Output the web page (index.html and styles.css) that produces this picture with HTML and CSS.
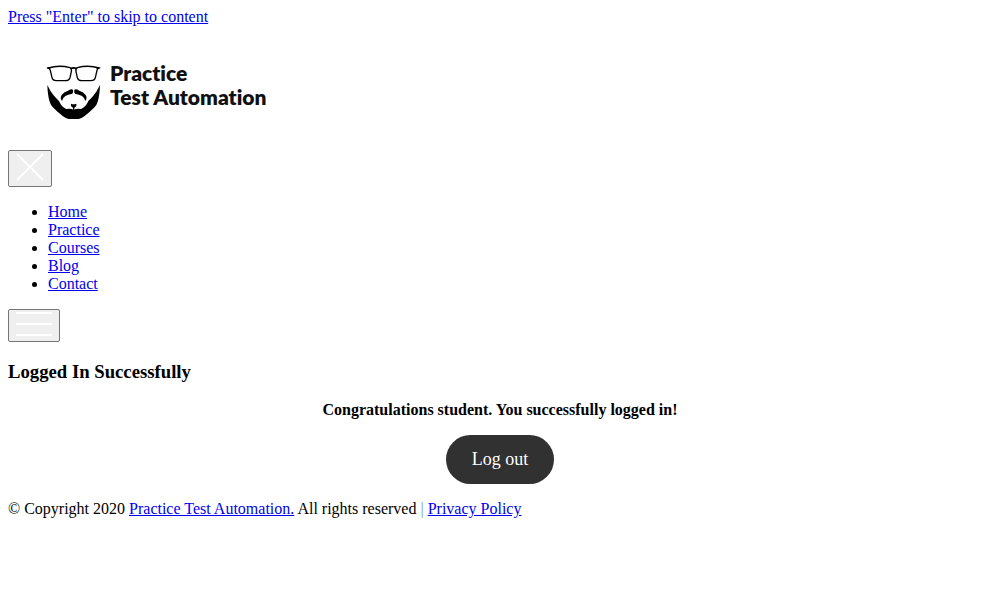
FILE: index.html
```html
<!DOCTYPE html>
<html lang="en">
<head>
<meta charset="utf-8">
<meta name="viewport" content="width=device-width, initial-scale=1">
<title>Logged In Successfully | Practice Test Automation</title>
<link rel="stylesheet" href="styles.css">
</head>
<body>
<a class="skip" href="#content">Press "Enter" to skip to content</a>
<header>
  <div class="logo">
    <svg class="logo-mark" viewBox="0 0 210 210" aria-hidden="true">
      <g fill="none" stroke="#000" stroke-width="4">
        <path d="M25 39 Q57 29 90 38 Q96 41 94 50 L90 68 Q87 77 77 77 L49 77 Q38 77 36 68 L31 46 Q30 41 25 39Z"/>
        <path d="M177 39 Q145 29 112 38 Q106 41 108 50 L112 68 Q115 77 125 77 L153 77 Q164 77 166 68 L171 46 Q172 41 177 39Z"/>
        <path d="M92 41 Q101 36 110 41" stroke-width="5"/>
        <path d="M22 38 L30 41 M178 38 L170 41" stroke-width="5"/>
      </g>
      <path d="M22 90 Q30 108 42 122 Q50 131 57 138 Q65 157 79 162 Q90 159 101 164 Q112 159 123 162 Q137 157 145 138 Q152 131 160 122 Q172 108 180 90 Q179 122 173 140 Q171 149 162 158 Q148 172 133 184 Q125 191 116 192 L86 192 Q77 191 69 184 Q54 172 40 158 Q31 149 29 140 Q23 122 22 90Z"/>
      <path d="M99 104 Q101 111 97 116 Q84 118 76 123 Q69 127 66 138 Q59 130 65 120 Q73 110 84 107 Q94 100 99 104Z"/>
      <path d="M103 104 Q101 111 105 116 Q118 118 126 123 Q133 127 136 138 Q143 130 137 120 Q129 110 118 107 Q108 100 103 104Z"/>
      <path d="M93 146 Q101 149 109 146 Q111 154 103 158 L103 165 L99 165 L99 158 Q91 154 93 146Z"/>
    </svg>
    <div class="logo-text">Practice<br>Test Automation</div>
  </div>
  <nav>
    <button class="toggle" type="button" aria-label="Close menu">
      <svg width="28" height="28" viewBox="0 0 28 28" aria-hidden="true"><path d="M1 1 27 27M27 1 1 27"/></svg>
    </button>
    <ul class="menu">
      <li><a href="#home">Home</a></li>
      <li><a href="#practice">Practice</a></li>
      <li><a href="#courses">Courses</a></li>
      <li><a href="#blog">Blog</a></li>
      <li><a href="#contact">Contact</a></li>
    </ul>
    <button class="toggle" type="button" aria-label="Open menu">
      <svg width="36" height="24" viewBox="0 0 36 24" aria-hidden="true"><path d="M0 1H36M0 12H36M0 23H36"/></svg>
    </button>
  </nav>
</header>
<main id="content">
  <h3 class="title">Logged In Successfully</h3>
  <p class="message">Congratulations student. You successfully logged in!</p>
  <div class="actions"><a class="logout" href="#logout">Log out</a></div>
</main>
<footer>© Copyright 2020 <a href="#home">Practice Test Automation.</a> All rights reserved <span class="divider">|</span> <a href="#privacy">Privacy Policy</a></footer>
</body>
</html>
```
FILE: styles.css
```css
body {
  margin: 8px;
  background: #fff;
  color: #000;
  font: 16px/18px "Liberation Serif", "Times New Roman", serif;
}

a {
  color: #0000ee;
}

.skip {
  display: block;
  width: fit-content;
}

.logo {
  display: flex;
  align-items: flex-start;
  padding: 29px 32px 25px;
}

.logo-mark {
  width: 70px;
  height: 70px;
}

.logo-text {
  padding-top: 6px;
  color: #111;
  font: 800 21px/24px Lato, sans-serif;
  font-variant-ligatures: none;
}

.toggle {
  display: flex;
  align-items: center;
  justify-content: center;
  box-sizing: border-box;
  padding: 2px 7px 5px;
  border: 1px solid #767676;
  border-radius: 2px;
  background: #efefef;
}

.toggle path {
  fill: none;
  stroke: #fff;
  stroke-width: 2;
}

.menu {
  margin: 16px 0;
  padding-left: 40px;
}

.title {
  margin: 19px 0;
  line-height: 21px;
}

.message {
  margin: 0 0 16px;
  font-weight: bold;
  text-align: center;
}

.actions {
  display: flex;
  justify-content: center;
  margin-bottom: 16px;
}

.logout {
  padding: 14px 26px;
  border-radius: 25px;
  background: #313131;
  color: #fff;
  font-size: 18px;
  line-height: 21px;
  text-decoration: none;
}

.divider {
  color: #6f9fc8;
}
```
